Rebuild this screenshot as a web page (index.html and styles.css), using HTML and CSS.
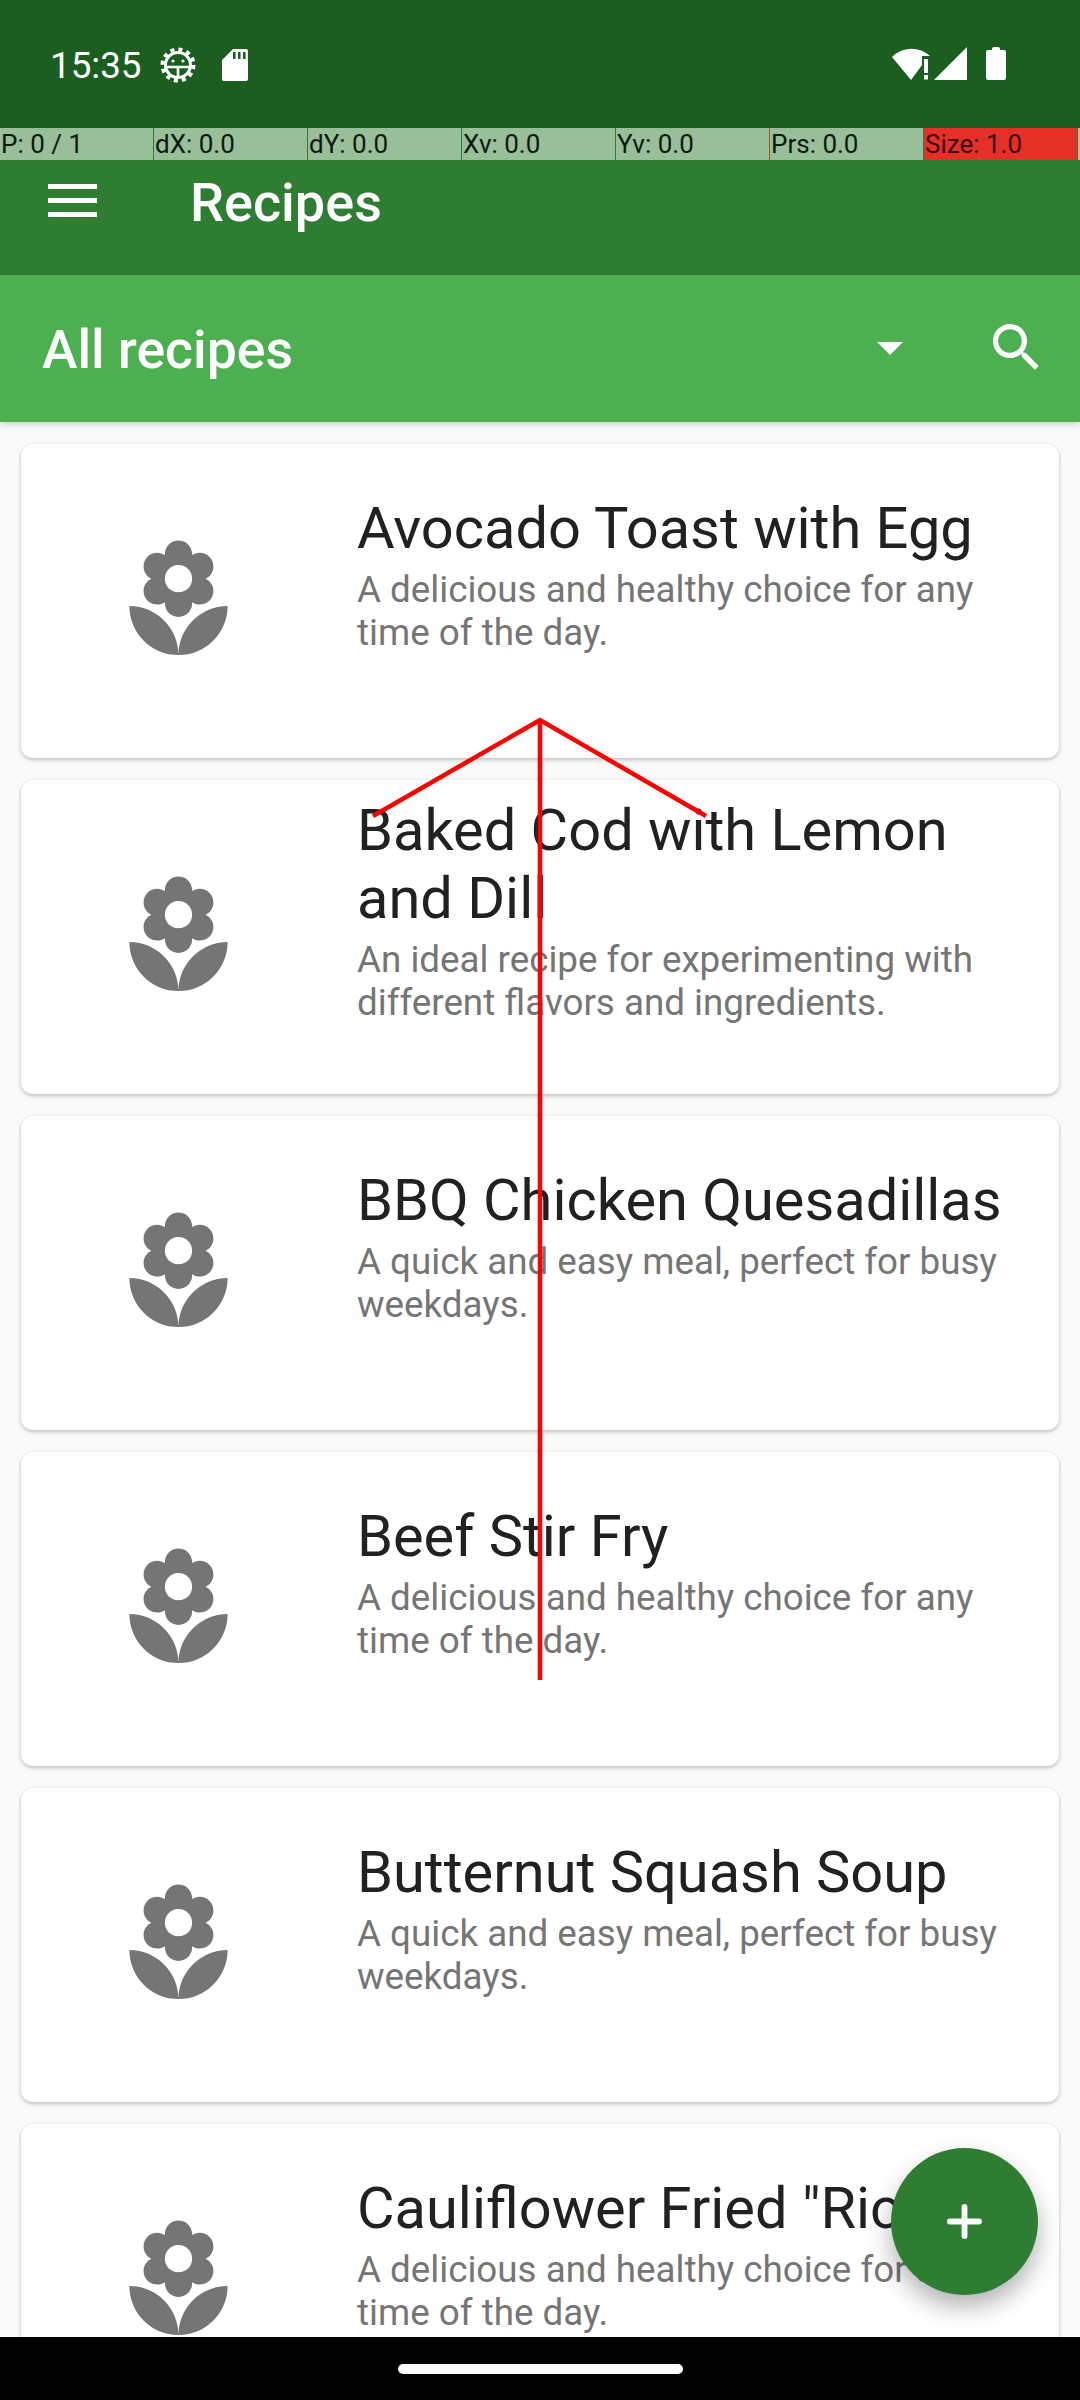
FILE: index.html
```html
<!DOCTYPE html>
<html lang="en">
  <head>
    <meta charset="UTF-8" />
    <meta name="viewport" content="width=device-width, initial-scale=1.0" />
    <title>Recipes</title>
    <link rel="stylesheet" href="styles.css">
  </head>
  <body>
    <svg width="0" height="0" class="defs">
      <symbol id="flower" viewBox="0 0 24 24">
        <path d="M12 22c4.97 0 9-4.03 9-9-4.97 0-9 4.03-9 9zM5.600 10.250c0 1.380 1.120 2.500 2.500 2.500.53 0 1.010-.16 1.420-.44l-.02.19c0 1.380 1.120 2.500 2.500 2.500s2.500-1.120 2.500-2.500l-.02-.19c.4.28.89.44 1.420.44 1.380 0 2.500-1.120 2.500-2.500 0-1-.59-1.850-1.430-2.250.84-.4 1.430-1.250 1.430-2.250 0-1.380-1.120-2.500-2.500-2.500-.53 0-1.010.16-1.420.44l.02-.19C14.500 2.120 13.380 1 12 1S9.500 2.120 9.500 3.500l.02.19c-.4-.28-.89-.44-1.420-.44-1.380 0-2.500 1.120-2.500 2.500 0 1 .59 1.850 1.430 2.250-.84.4-1.430 1.250-1.430 2.250zM12 5.500c1.380 0 2.500 1.120 2.500 2.500s-1.120 2.500-2.500 2.500S9.500 9.380 9.500 8s1.120-2.500 2.500-2.500zM3 13c0 4.970 4.030 9 9 9 0-4.970-4.030-9-9-9z"/>
      </symbol>
    </svg>

    <div class="screen">
      <div class="status-bar">
        <span class="clock">15:35</span>
        <svg class="gear-icon" viewBox="0 0 36 36">
          <circle cx="18" cy="18" r="12.500" fill="none" stroke="#fff" stroke-width="3"/>
          <circle cx="18" cy="18" r="15.500" fill="none" stroke="#fff" stroke-width="4" stroke-dasharray="4 4.110"/>
          <path d="M6 20h24M18 20v10" stroke="#fff" stroke-width="2.600" fill="none"/>
          <circle cx="13" cy="14" r="1.600" fill="#fff"/>
          <circle cx="23" cy="14" r="1.600" fill="#fff"/>
        </svg>
        <svg class="sd-icon" viewBox="0 0 26 32">
          <path fill-rule="evenodd" d="M11 0h13a2 2 0 0 1 2 2v28a2 2 0 0 1-2 2H2a2 2 0 0 1-2-2V11zM11 3v7h2.500V3zM16 3v7h2.500V3zM21 3v7h2.500V3z" fill="#fff"/>
        </svg>
        <span class="status-space"></span>
        <svg class="wifi-icon" viewBox="0 0 38 33">
          <path d="M0 10A27 27 0 0 1 38 9H30V18L19 33z" fill="#fff"/>
          <path d="M32 12h4v14h-4zM32 28h4v4.500h-4z" fill="#fff"/>
        </svg>
        <svg class="signal-icon" viewBox="0 0 33 33"><path d="M0 33 33 0V33z" fill="#fff"/></svg>
        <svg class="battery-icon" viewBox="0 0 20 33">
          <path d="M6 2q0-2 2-2h4q2 0 2 2v1h4q2 0 2 2v26q0 2-2 2H2q-2 0-2-2V5q0-2 2-2h4z" fill="#fff"/>
        </svg>
      </div>

      <header class="app-bar">
        <div class="hamburger"><span></span><span></span><span></span></div>
        <h1>Recipes</h1>
      </header>

      <div class="filter-bar">
        <span class="filter-title">All recipes</span>
        <span class="dropdown-arrow"></span>
        <svg class="search-icon" viewBox="0 0 24 24">
          <path fill="#fff" d="M15.500 14h-.79l-.28-.27C15.410 12.590 16 11.110 16 9.500 16 5.910 13.090 3 9.500 3S3 5.910 3 9.500 5.910 16 9.500 16c1.610 0 3.090-.59 4.230-1.570l.27.28v.79l5 4.990L20.490 19l-4.990-5zm-6 0C7.010 14 5 11.990 5 9.500S7.010 5 9.500 5 14 7.010 14 9.500 11.990 14 9.500 14z"/>
        </svg>
      </div>

      <main class="recipe-list">
        <article class="recipe-card">
          <svg class="recipe-icon"><use href="#flower"/></svg>
          <div class="recipe-text">
            <h2>Avocado Toast with Egg</h2>
            <p>A delicious and healthy choice for any time of the day.</p>
          </div>
        </article>
        <article class="recipe-card">
          <svg class="recipe-icon"><use href="#flower"/></svg>
          <div class="recipe-text">
            <h2>Baked Cod with Lemon and Dill</h2>
            <p>An ideal recipe for experimenting with different flavors and ingredients.</p>
          </div>
        </article>
        <article class="recipe-card">
          <svg class="recipe-icon"><use href="#flower"/></svg>
          <div class="recipe-text">
            <h2>BBQ Chicken Quesadillas</h2>
            <p>A quick and easy meal, perfect for busy weekdays.</p>
          </div>
        </article>
        <article class="recipe-card">
          <svg class="recipe-icon"><use href="#flower"/></svg>
          <div class="recipe-text">
            <h2>Beef Stir Fry</h2>
            <p>A delicious and healthy choice for any time of the day.</p>
          </div>
        </article>
        <article class="recipe-card">
          <svg class="recipe-icon"><use href="#flower"/></svg>
          <div class="recipe-text">
            <h2>Butternut Squash Soup</h2>
            <p>A quick and easy meal, perfect for busy weekdays.</p>
          </div>
        </article>
        <article class="recipe-card">
          <svg class="recipe-icon"><use href="#flower"/></svg>
          <div class="recipe-text">
            <h2>Cauliflower Fried "Rice"</h2>
            <p>A delicious and healthy choice for any time of the day.</p>
          </div>
        </article>
      </main>

      <button class="fab">
        <svg viewBox="0 0 36 36"><path d="M15 3a3 3 0 0 1 6 0v12h12a3 3 0 0 1 0 6H21v12a3 3 0 0 1-6 0V21H3a3 3 0 0 1 0-6h12z" fill="#fff"/></svg>
      </button>

      <div class="nav-bar"><span class="nav-pill"></span></div>

      <div class="pointer-bar">
        <div class="pointer-cell">P: 0 / 1</div>
        <div class="pointer-cell">dX: 0.0</div>
        <div class="pointer-cell">dY: 0.0</div>
        <div class="pointer-cell">Xv: 0.0</div>
        <div class="pointer-cell">Yv: 0.0</div>
        <div class="pointer-cell pointer-prs">Prs: 0.0</div>
        <div class="pointer-cell pointer-size">Size: 1.0</div>
        <div class="pointer-end"></div>
      </div>

      <svg class="touch-trace" viewBox="0 0 1080 2400">
        <path d="M373 816 540 720 706 816M540 720V1680" fill="none" stroke="#f00" stroke-width="4.500"/>
      </svg>
    </div>
  </body>
</html>
```

FILE: styles.css
```css
* {
  box-sizing: border-box;
}
html,
body {
  margin: 0;
  padding: 0;
}
body {
  font-family: Roboto, sans-serif;
  background: #fafafa;
}
.defs {
  position: absolute;
}
.screen {
  position: relative;
  width: 1080px;
  height: 2400px;
  overflow: hidden;
  display: flex;
  flex-direction: column;
  background: #fafafa;
}

/* status bar */
.status-bar {
  height: 128px;
  flex: none;
  display: flex;
  align-items: center;
  padding: 2px 74px 0 50px;
  background: #1b5e20;
}
.clock {
  font-size: 36.750px;
  color: #fff;
  width: 110px;
}
.gear-icon {
  width: 36px;
  height: 36px;
}
.sd-icon {
  width: 26px;
  height: 32px;
  margin-left: 26px;
}
.status-space {
  flex: 1;
}
.wifi-icon {
  width: 38px;
  height: 33px;
  margin-bottom: 3px;
}
.signal-icon {
  width: 33px;
  height: 33px;
  margin: 0 0 3px 4px;
}
.battery-icon {
  width: 20px;
  height: 33px;
  margin: 0 0 3px 19px;
}

/* pointer location overlay */
.pointer-bar {
  position: absolute;
  left: 0;
  top: 128px;
  width: 1080px;
  height: 32px;
  display: flex;
  gap: 1px;
}
.pointer-cell {
  width: 153px;
  padding-left: 1px;
  font-size: 26px;
  line-height: 32px;
  color: #0b1a0d;
  background: #98bf9a;
  white-space: nowrap;
}
.pointer-prs {
  box-shadow: -1px 0 0 #a5502f;
}
.pointer-size {
  background: #e53028;
  color: #3c0a08;
}
.pointer-end {
  flex: 1;
  background: #c9b59a;
}

/* app bar */
.app-bar {
  height: 147px;
  flex: none;
  display: flex;
  align-items: center;
  background: #2e7d32;
}
.hamburger {
  width: 49px;
  margin: 0 0 3px 48px;
  display: flex;
  flex-direction: column;
  gap: 9px;
}
.hamburger span {
  height: 5px;
  background: #fff;
}
h1 {
  margin: 2px 0 0 93px;
  font-size: 54px;
  font-weight: 500;
  color: #fff;
}

/* filter */
.filter-bar {
  position: relative;
  z-index: 1;
  height: 147px;
  flex: none;
  display: flex;
  align-items: center;
  padding-left: 42px;
  background: #4caf50;
  box-shadow: 0 2px 6px rgba(0, 0, 0, 0.2);
}
.filter-title {
  flex: 1;
  padding-top: 2px;
  font-size: 53.500px;
  font-weight: 500;
  color: #fff;
}
.dropdown-arrow {
  width: 0;
  height: 0;
  margin: 0 82px 0 0;
  border-left: 13px solid transparent;
  border-right: 13px solid transparent;
  border-top: 13px solid #fff;
}
.search-icon {
  width: 63px;
  height: 63px;
  margin: 0 32px 2px 0;
}

/* list */
.recipe-list {
  flex: 1;
  min-height: 0;
  overflow: hidden;
  padding: 22px 21px 0;
  display: flex;
  flex-direction: column;
  gap: 22px;
}
.recipe-card {
  flex: none;
  height: 314px;
  display: flex;
  background: #fff;
  border-radius: 12px;
  box-shadow: 0 2px 4px rgba(0, 0, 0, 0.22), 0 0 2px rgba(0, 0, 0, 0.08);
}
.recipe-icon {
  flex: none;
  width: 131px;
  height: 131px;
  margin: 91px 0 0 92px;
  fill: #757575;
}
.recipe-text {
  flex: 1;
  min-width: 0;
  margin-left: 113px;
  padding: 50px 40px 0 0;
}
.recipe-card:nth-child(2) .recipe-text {
  padding-top: 16px;
}
h2 {
  margin: 0;
  font-size: 57.750px;
  font-weight: 400;
  line-height: 68px;
  color: #212121;
}
.recipe-text p {
  margin: 6px 0 0;
  font-size: 36.750px;
  line-height: 43px;
  color: #757575;
}

/* floating button */
.fab {
  position: absolute;
  left: 891px;
  top: 2148px;
  width: 147px;
  height: 147px;
  padding: 0;
  border: none;
  border-radius: 50%;
  background: #2e7d32;
  box-shadow: 0 12px 24px rgba(0, 0, 0, 0.3);
  display: flex;
  align-items: center;
  justify-content: center;
}
.fab svg {
  width: 35px;
  height: 35px;
}

/* pointer trace */
.touch-trace {
  position: absolute;
  left: 0;
  top: 0;
  width: 1080px;
  height: 2400px;
  pointer-events: none;
}

/* navigation bar */
.nav-bar {
  position: relative;
  z-index: 2;
  height: 63px;
  flex: none;
  display: flex;
  align-items: center;
  justify-content: center;
  background: #000;
}
.nav-pill {
  width: 285px;
  height: 10px;
  border-radius: 5px;
  background: #fff;
}
```
